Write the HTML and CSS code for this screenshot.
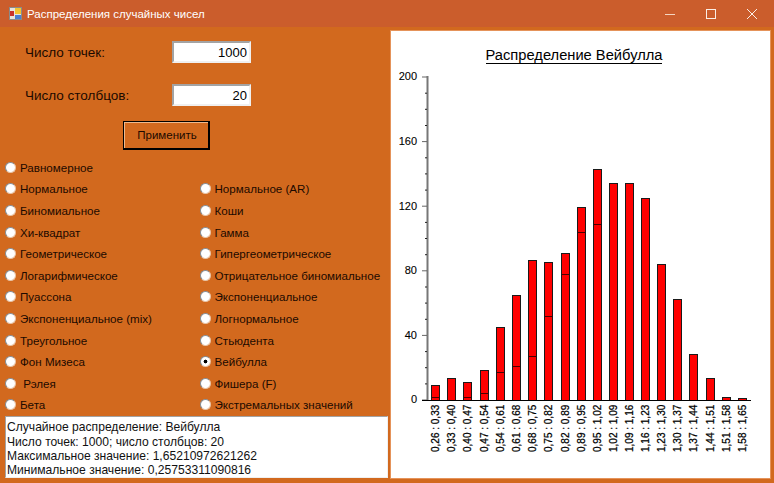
FILE: index.html
```html
<!DOCTYPE html>
<html lang="ru">

<head>
  <meta charset="UTF-8">
  <title>Распределения случайных чисел</title>
  <link rel="stylesheet" href="styles.css">
</head>

<body>

  <div class="titlebar">
    <svg class="app-icon" width="13" height="13" viewBox="0 0 13 13">
      <rect x="0.5" y="0.5" width="12" height="12" fill="#e8e4dc" stroke="#8a8a8a" />
      <rect x="6" y="1" width="6" height="6" fill="#f4c430" />
      <rect x="1" y="4" width="4" height="5" fill="#c8322a" />
      <rect x="6" y="8" width="6" height="4" fill="#4a7fd0" />
    </svg>
    <span class="title-text">Распределения случайных чисел</span>
    <div class="win-controls">
      <svg width="10" height="10" viewBox="0 0 10 10"><path d="M0 5.5H10" stroke="#f5d5c0" /></svg>
      <svg width="10" height="10" viewBox="0 0 10 10"><rect x="0.5" y="0.5" width="9" height="9" fill="none" stroke="#fbeee6" /></svg>
      <svg width="10" height="10" viewBox="0 0 10 10"><path d="M0 0L10 10M10 0L0 10" stroke="#fbeee6" /></svg>
    </div>
  </div>

  <div class="main">
    <div class="left-panel">
      <div class="field-row">
        <label class="field-label">Число точек:</label>
        <input class="field-input" type="text" value="1000">
      </div>
      <div class="field-row">
        <label class="field-label">Число столбцов:</label>
        <input class="field-input" type="text" value="20">
      </div>
      <button class="btn">Применить</button>

      <div class="radio-grid">
        <label class="radio"><input type="radio" name="dist">Равномерное</label>
        <span></span>
        <label class="radio"><input type="radio" name="dist">Нормальное</label>
        <label class="radio"><input type="radio" name="dist">Нормальное (AR)</label>
        <label class="radio"><input type="radio" name="dist">Биномиальное</label>
        <label class="radio"><input type="radio" name="dist">Коши</label>
        <label class="radio"><input type="radio" name="dist">Хи-квадрат</label>
        <label class="radio"><input type="radio" name="dist">Гамма</label>
        <label class="radio"><input type="radio" name="dist">Геометрическое</label>
        <label class="radio"><input type="radio" name="dist">Гипергеометрическое</label>
        <label class="radio"><input type="radio" name="dist">Логарифмическое</label>
        <label class="radio"><input type="radio" name="dist">Отрицательное биномиальное</label>
        <label class="radio"><input type="radio" name="dist">Пуассона</label>
        <label class="radio"><input type="radio" name="dist">Экспоненциальное</label>
        <label class="radio"><input type="radio" name="dist">Экспоненциальное (mix)</label>
        <label class="radio"><input type="radio" name="dist">Логнормальное</label>
        <label class="radio"><input type="radio" name="dist">Треугольное</label>
        <label class="radio"><input type="radio" name="dist">Стьюдента</label>
        <label class="radio"><input type="radio" name="dist">Фон Мизеса</label>
        <label class="radio"><input type="radio" name="dist" checked>Вейбулла</label>
        <label class="radio"><input type="radio" name="dist">&nbsp;Рэлея</label>
        <label class="radio"><input type="radio" name="dist">Фишера (F)</label>
        <label class="radio"><input type="radio" name="dist">Бета</label>
        <label class="radio"><input type="radio" name="dist">Экстремальных значений</label>
      </div>

      <div class="output">
        <div>Случайное распределение: Вейбулла</div>
        <div>Число точек: 1000; число столбцов: 20</div>
        <div>Максимальное значение: 1,65210972621262</div>
        <div>Минимальное значение: 0,25753311090816</div>
      </div>
    </div>

    <div class="chart-panel">
      <svg class="chart" width="379" height="447" viewBox="391 31 379 447">
        <text class="chart-title" x="574" y="60" text-anchor="middle">Распределение Вейбулла</text>
        <path class="title-line" d="M486 63.5H662" />

        <!-- y axis -->
        <path class="axis" d="M427.5 76V401" />
        <path class="tick-major" d="M422 77H427M422 141.6H427M422 206.2H427M422 270.8H427M422 335.4H427M422 400H427" />
        <path class="tick" d="M425 93.2H427M425 109.3H427M425 125.5H427M425 157.8H427M425 173.9H427M425 190.1H427M425 222.4H427M425 238.5H427M425 254.7H427M425 287H427M425 303.1H427M425 319.3H427M425 351.6H427M425 367.7H427M425 383.9H427" />
        <text class="y-label" x="417" y="80.4" text-anchor="end">200</text>
        <text class="y-label" x="417" y="145" text-anchor="end">160</text>
        <text class="y-label" x="417" y="209.6" text-anchor="end">120</text>
        <text class="y-label" x="417" y="274.2" text-anchor="end">80</text>
        <text class="y-label" x="417" y="338.8" text-anchor="end">40</text>
        <text class="y-label" x="417" y="403.4" text-anchor="end">0</text>

        <!-- bars -->
        <rect class="bar" x="431.5" y="385.5" width="8" height="15" />
        <rect class="bar" x="447.5" y="378.5" width="8" height="22" />
        <rect class="bar" x="463.5" y="382.5" width="8" height="18" />
        <rect class="bar" x="480.5" y="370.5" width="8" height="30" />
        <rect class="bar" x="496.5" y="327.5" width="8" height="73" />
        <rect class="bar" x="512.5" y="295.5" width="8" height="105" />
        <rect class="bar" x="528.5" y="260.5" width="8" height="140" />
        <rect class="bar" x="544.5" y="262.5" width="8" height="138" />
        <rect class="bar" x="561.5" y="253.5" width="8" height="147" />
        <rect class="bar" x="577.5" y="207.5" width="8" height="193" />
        <rect class="bar" x="593.5" y="169.5" width="8" height="231" />
        <rect class="bar" x="609.5" y="183.5" width="8" height="217" />
        <rect class="bar" x="625.5" y="183.5" width="8" height="217" />
        <rect class="bar" x="641.5" y="198.5" width="8" height="202" />
        <rect class="bar" x="657.5" y="264.5" width="8" height="136" />
        <rect class="bar" x="673.5" y="299.5" width="8" height="101" />
        <rect class="bar" x="689.5" y="354.5" width="8" height="46" />
        <rect class="bar" x="706.5" y="378.5" width="8" height="22" />
        <rect class="bar" x="722.5" y="397.5" width="8" height="3" />
        <rect class="bar" x="738.5" y="398.5" width="8" height="2" />
        <path class="bar-mark" d="M432 397.5H439M464 397.5H471M481 393.5H488M497 372.5H504M513 366.5H520M529 356.5H536M545 316.5H552M562 274.5H569M578 232.5H585M594 224.5H601" />
        <path class="x-axis" d="M422 400.5H751" />

        <!-- x labels -->
        <text class="x-label" transform="translate(439 452) rotate(-90)">0,26 : 0,33</text>
        <text class="x-label" transform="translate(455 452) rotate(-90)">0,33 : 0,40</text>
        <text class="x-label" transform="translate(471 452) rotate(-90)">0,40 : 0,47</text>
        <text class="x-label" transform="translate(488 452) rotate(-90)">0,47 : 0,54</text>
        <text class="x-label" transform="translate(504 452) rotate(-90)">0,54 : 0,61</text>
        <text class="x-label" transform="translate(520 452) rotate(-90)">0,61 : 0,68</text>
        <text class="x-label" transform="translate(536 452) rotate(-90)">0,68 : 0,75</text>
        <text class="x-label" transform="translate(552 452) rotate(-90)">0,75 : 0,82</text>
        <text class="x-label" transform="translate(569 452) rotate(-90)">0,82 : 0,89</text>
        <text class="x-label" transform="translate(585 452) rotate(-90)">0,89 : 0,95</text>
        <text class="x-label" transform="translate(601 452) rotate(-90)">0,95 : 1,02</text>
        <text class="x-label" transform="translate(617 452) rotate(-90)">1,02 : 1,09</text>
        <text class="x-label" transform="translate(633 452) rotate(-90)">1,09 : 1,16</text>
        <text class="x-label" transform="translate(649 452) rotate(-90)">1,16 : 1,23</text>
        <text class="x-label" transform="translate(665 452) rotate(-90)">1,23 : 1,30</text>
        <text class="x-label" transform="translate(681 452) rotate(-90)">1,30 : 1,37</text>
        <text class="x-label" transform="translate(697 452) rotate(-90)">1,37 : 1,44</text>
        <text class="x-label" transform="translate(714 452) rotate(-90)">1,44 : 1,51</text>
        <text class="x-label" transform="translate(730 452) rotate(-90)">1,51 : 1,58</text>
        <text class="x-label" transform="translate(746 452) rotate(-90)">1,58 : 1,65</text>
      </svg>
    </div>
  </div>

</body>

</html>
```

FILE: styles.css
```css
body {
  font-family: "Liberation Sans", Arial, sans-serif;
  background-color: #d2691e;
  color: #1c0a00;
  margin: 0;
  width: 774px;
  height: 483px;
  overflow: hidden;
}

.titlebar {
  display: flex;
  align-items: center;
  height: 27px;
  padding-left: 9px;
  background: #cb5d2c;
  color: white;
}

.app-icon {
  margin-right: 5px;
}

.title-text {
  font-size: 11.5px;
}

.win-controls {
  display: flex;
  gap: 31px;
  margin-left: auto;
  margin-right: 17px;
}

.main {
  display: flex;
  align-items: flex-start;
}

.left-panel {
  width: 390px;
  padding-top: 14px;
}

.field-row {
  display: flex;
  align-items: center;
  height: 22px;
  padding-left: 25px;
  margin-bottom: 21px;
  font-size: 13.5px;
}

.field-label {
  width: 147px;
}

.field-input {
  box-sizing: border-box;
  width: 79px;
  height: 22px;
  padding: 0 2px;
  border: 2px solid;
  border-color: #a3a3a3 #f0f0f0 #f0f0f0 #a3a3a3;
  font-family: inherit;
  font-size: 13px;
  text-align: right;
  color: #000;
  background: white;
}

.btn {
  display: block;
  box-sizing: border-box;
  width: 87px;
  height: 29px;
  margin: -6px 0 6.5px 123px;
  padding: 0 0 0 2px;
  background: #d2691e;
  border: 1px solid #000;
  border-right-width: 2px;
  border-bottom-width: 2px;
  box-shadow: inset 1px 1px 0 #f0b98c;
  font-family: inherit;
  font-size: 11.5px;
  color: #1c0a00;
}

.radio-grid {
  display: grid;
  grid-template-columns: 194.5px 1fr;
  grid-auto-rows: 21.6px;
  padding-left: 5px;
  margin-bottom: 0.5px;
}

.radio {
  display: flex;
  align-items: center;
  font-size: 11.6px;
  white-space: nowrap;
}

.radio input {
  appearance: none;
  box-sizing: border-box;
  width: 11px;
  height: 11px;
  margin: 0 4px 0 0;
  border: 1px solid;
  border-color: #838d96 #e9c4a6 #e9c4a6 #838d96;
  border-radius: 50%;
  background: white;
}

.radio input:checked {
  background: radial-gradient(circle, #000 0 1.6px, white 2.2px);
}

.output {
  box-sizing: border-box;
  width: 383px;
  height: 62px;
  margin-left: 5px;
  padding: 3px 0 0 1px;
  background: white;
  border: 1px solid;
  border-color: #a3a3a3 #f0f0f0 #f0f0f0 #a3a3a3;
  font-size: 12.1px;
  line-height: 14.4px;
  color: #111;
}

.chart-panel {
  box-sizing: border-box;
  width: 381px;
  height: 449px;
  margin-top: 3px;
  background: white;
  border: 1px solid #e5935a;
}

.chart {
  display: block;
}

.chart-title {
  font-size: 14.7px;
  fill: #000;
}

.title-line {
  stroke: #000;
  fill: none;
}

.axis {
  stroke: #777;
  stroke-width: 2;
  fill: none;
}

.tick {
  stroke: #222;
  fill: none;
}

.tick-major {
  stroke: #666;
  fill: none;
}

.y-label {
  font-size: 11px;
  fill: #000;
  stroke: #000;
  stroke-width: 0.1;
}

.bar {
  fill: #ff0000;
  stroke: #1a1a1a;
}

.bar-mark {
  stroke: #4a0000;
  fill: none;
}

.x-axis {
  stroke: #000;
  fill: none;
}

.x-label {
  font-size: 10px;
  fill: #000;
  stroke: #000;
  stroke-width: 0.25;
}
```
